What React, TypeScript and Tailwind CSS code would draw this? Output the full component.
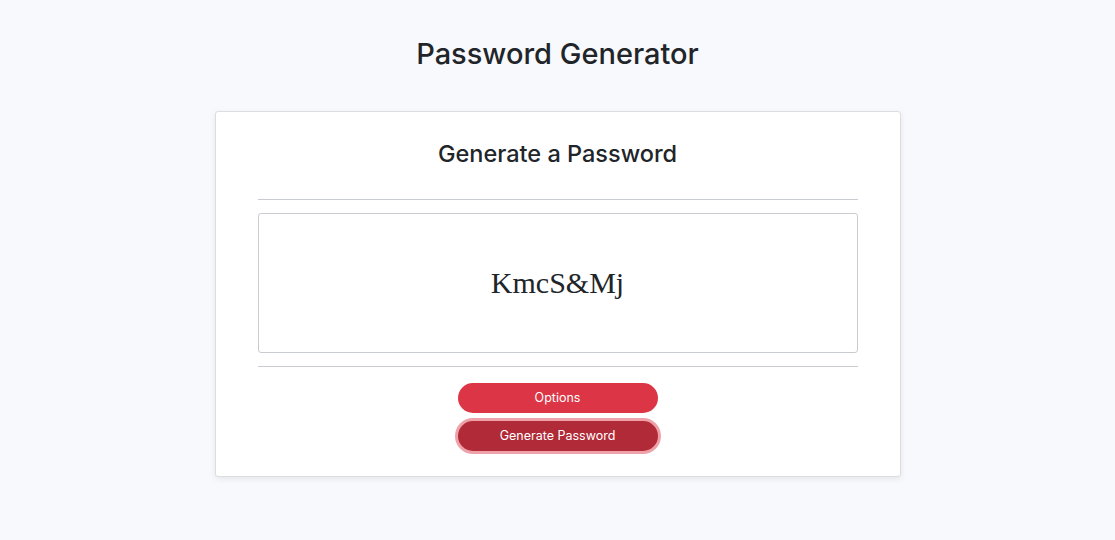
import React from 'react';

export default function App() {
  return (
    <div className="min-h-[540px] bg-[#f8f9fc] pt-[36px] font-['Inter',sans-serif] text-[#212529]">
      <h1 className="text-center text-[29px] leading-[36px] font-medium">Password Generator</h1>

      <div className="mx-auto mt-[39px] w-[686px] rounded-[3px] border border-[#dcdde1] bg-white px-[42px] pt-[26px] pb-[25px] shadow-[0_2px_6px_rgba(0,0,0,0.08)]">
        <h2 className="text-center text-[23.5px] leading-[32px] font-medium">Generate a Password</h2>

        <hr className="mt-[29px] border-t border-[#c8cbcf]" />

        <div className="mt-[13px] flex h-[140px] items-center justify-center rounded-[3px] border border-[#c8ccd1] bg-white">
          <span className="font-['Liberation_Serif',serif] text-[30px] leading-none font-medium">KmcS&amp;Mj</span>
        </div>

        <hr className="mt-[13px] border-t border-[#c8cbcf]" />

        <div className="mt-[16px] flex flex-col items-center gap-[8px]">
          <button className="h-[30px] w-[200px] rounded-full bg-[#dc3545] text-[12.5px] text-white">
            Options
          </button>
          <button className="h-[30px] w-[200px] rounded-full bg-[#b02a37] text-[12.5px] text-white ring-[3px] ring-[#eea1a9]">
            Generate Password
          </button>
        </div>
      </div>
    </div>
  );
}
